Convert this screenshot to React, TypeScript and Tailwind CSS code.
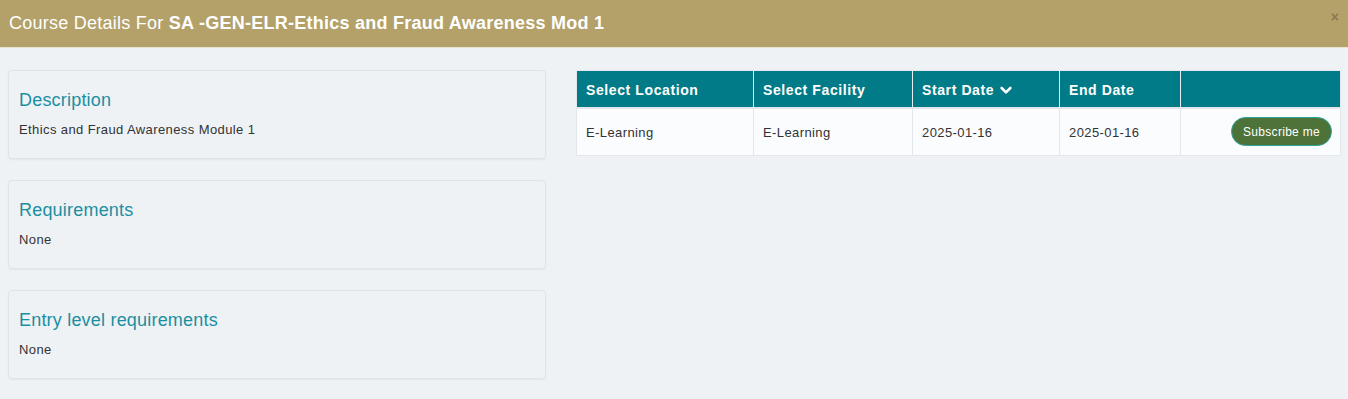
const sections = [
  { title: 'Description', body: 'Ethics and Fraud Awareness Module 1' },
  { title: 'Requirements', body: 'None' },
  { title: 'Entry level requirements', body: 'None' },
];

const sessions = [
  { location: 'E-Learning', facility: 'E-Learning', start: '2025-01-16', end: '2025-01-16' },
];

export default function App() {
  return (
    <div className="min-h-[399px] bg-[#eff2f5] text-[#333] font-['Liberation_Sans',Arial,sans-serif]">
      {/* Header */}
      <div className="h-12 bg-[#b3a169] flex items-center justify-between pl-[9px] pr-[9px] border-b border-[#e9e4d2]">
        <h1 className="text-[18px] text-white tracking-[0.25px]">
          Course Details For <span className="font-bold">SA -GEN-ELR-Ethics and Fraud Awareness Mod 1</span>
        </h1>
        <span className="text-[14px] font-bold text-[#8a7c4e] leading-none -mt-[14px]">×</span>
      </div>

      <div className="flex gap-[30px] pl-2 pr-[7px] pt-[22px]">
        {/* Left info cards */}
        <div className="w-[538px] flex flex-col gap-[21px]">
          {sections.map((s) => (
            <div key={s.title} className="h-[89px] rounded border border-[#dfe2e6] shadow-[0_1px_2px_rgba(0,0,0,0.05)] px-[10px] pt-[17px]">
              <h3 className="text-[18px] text-[#1a8fa1] leading-6 tracking-[0.2px]">{s.title}</h3>
              <p className="text-[13px] text-[#333] mt-[8px] tracking-[0.4px]">{s.body}</p>
            </div>
          ))}
        </div>

        {/* Sessions table */}
        <div className="flex-1">
          <table className="w-full border-collapse text-[13px] tracking-[0.4px] border border-[#e3e6ea]">
            <thead>
              <tr className="bg-[#007b87] text-white h-[37px] text-[14px] tracking-[0.6px]">
                <th className="text-left font-bold px-[9px] pt-[3px] w-[177px] border-r border-[#e6eef0]">Select Location</th>
                <th className="text-left font-bold px-[9px] pt-[3px] w-[159px] border-r border-[#e6eef0]">Select Facility</th>
                <th className="text-left font-bold px-[9px] pt-[3px] w-[147px] border-r border-[#e6eef0]">
                  <span className="inline-flex items-center gap-[5px]">
                    Start Date
                    <svg width="14" height="14" viewBox="0 0 24 24" fill="none" stroke="currentColor" strokeWidth="4.5" strokeLinecap="round" strokeLinejoin="round">
                      <path d="M4.5 8.5l7.5 7.5 7.5-7.5" />
                    </svg>
                  </span>
                </th>
                <th className="text-left font-bold px-[9px] pt-[3px] w-[121px] border-r border-[#e6eef0]">End Date</th>
                <th />
              </tr>
            </thead>
            <tbody>
              {sessions.map((r) => (
                <tr key={r.start} className="bg-[#fbfcfd] h-[48px] border-t-2 border-[#e3e6ea]">
                  <td className="px-[9px] pt-[2px] border-r border-[#e3e6ea]">{r.location}</td>
                  <td className="px-[9px] pt-[2px] border-r border-[#e3e6ea]">{r.facility}</td>
                  <td className="px-[9px] pt-[2px] border-r border-[#e3e6ea]">{r.start}</td>
                  <td className="px-[9px] pt-[2px] border-r border-[#e3e6ea]">{r.end}</td>
                  <td className="px-[8px] text-right">
                    <button className="h-[29px] px-[11px] rounded-full bg-[#4e7339] border border-[#2ea59a] text-white text-[12px] tracking-[0.3px]">
                      Subscribe me
                    </button>
                  </td>
                </tr>
              ))}
            </tbody>
          </table>
        </div>
      </div>
    </div>
  );
}
